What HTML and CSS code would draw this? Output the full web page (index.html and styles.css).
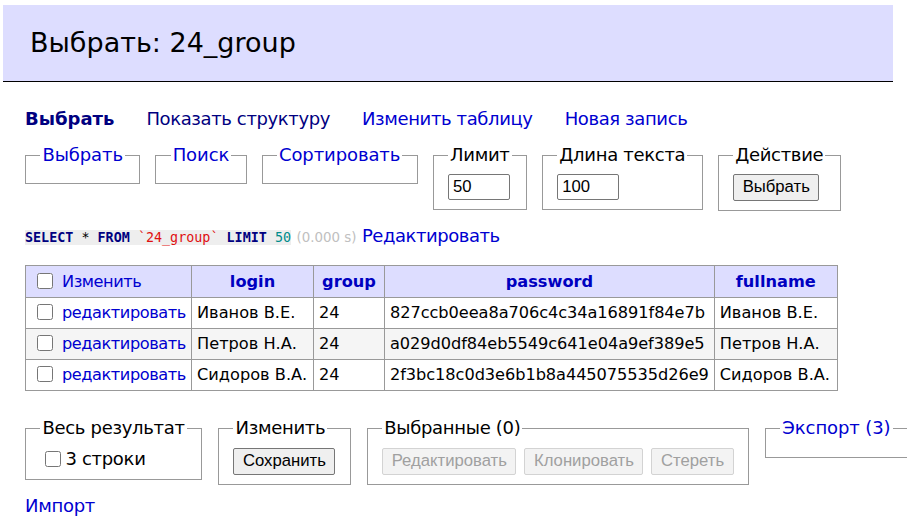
FILE: index.html
```html
<!DOCTYPE html>
<html lang="ru">
<head>
<meta charset="utf-8">
<title>Выбрать: 24_group</title>
<link rel="stylesheet" href="styles.css">
</head>
<body>
<div class="page">
  <h2 class="title">Выбрать: 24_group</h2>
  <div class="content">
    <p class="links">
      <a class="cur" href="#">Выбрать</a>
      <a class="visited" href="#">Показать структуру</a>
      <a href="#">Изменить таблицу</a>
      <a href="#">Новая запись</a>
    </p>
    <form class="filters">
      <fieldset class="fs"><legend><a href="#">Выбрать</a></legend><div class="empty"></div></fieldset>
      <fieldset class="fs"><legend><a href="#">Поиск</a></legend><div class="empty"></div></fieldset>
      <fieldset class="fs"><legend><a href="#">Сортировать</a></legend><div class="empty"></div></fieldset>
      <fieldset class="fs"><legend>Лимит</legend><input class="num" type="text" value="50"></fieldset>
      <fieldset class="fs"><legend>Длина текста</legend><input class="num" type="text" value="100"></fieldset>
      <fieldset class="fs"><legend>Действие</legend><button class="btn" type="button">Выбрать</button></fieldset>
    </form>
    <p class="query"><code class="sql"><b class="kw">SELECT</b> * <b class="kw">FROM</b> <span class="str">`24_group`</span> <b class="kw">LIMIT</b> <span class="n">50</span></code> <span class="time">(0.000 s)</span> <a href="#">Редактировать</a></p>
    <table class="data">
      <thead>
        <tr>
          <td class="first"><input type="checkbox" class="cb"><a href="#">Изменить</a></td>
          <th class="c-login"><a href="#">login</a></th>
          <th class="c-group"><a href="#">group</a></th>
          <th class="c-pass"><a href="#">password</a></th>
          <th class="c-full"><a href="#">fullname</a></th>
        </tr>
      </thead>
      <tbody>
        <tr>
          <td class="first"><input type="checkbox" class="cb"><a href="#">редактировать</a></td>
          <td>Иванов В.Е.</td><td>24</td><td class="hash">827ccb0eea8a706c4c34a16891f84e7b</td><td>Иванов В.Е.</td>
        </tr>
        <tr class="odd">
          <td class="first"><input type="checkbox" class="cb"><a href="#">редактировать</a></td>
          <td>Петров Н.А.</td><td>24</td><td class="hash">a029d0df84eb5549c641e04a9ef389e5</td><td>Петров Н.А.</td>
        </tr>
        <tr>
          <td class="first"><input type="checkbox" class="cb"><a href="#">редактировать</a></td>
          <td>Сидоров В.А.</td><td>24</td><td class="hash">2f3bc18c0d3e6b1b8a445075535d26e9</td><td>Сидоров В.А.</td>
        </tr>
      </tbody>
    </table>
    <div class="footer">
      <fieldset class="fs"><legend>Весь результат</legend><label class="all"><input type="checkbox" class="cb">3 строки</label></fieldset>
      <fieldset class="fs"><legend>Изменить</legend><button class="btn" type="button">Сохранить</button></fieldset>
      <fieldset class="fs"><legend>Выбранные (0)</legend><div class="btns"><button class="btn" type="button" disabled>Редактировать</button><button class="btn" type="button" disabled>Клонировать</button><button class="btn" type="button" disabled>Стереть</button></div></fieldset>
      <fieldset class="fs export"><legend><a href="#">Экспорт (3)</a></legend><div class="empty"></div></fieldset>
    </div>
    <p class="import"><a href="#">Импорт</a></p>
  </div>
</div>
</body>
</html>
```
FILE: styles.css
```css
html, body {
  margin: 0;
  padding: 0;
  overflow: hidden;
  background: #fff;
}
body {
  font-family: "DejaVu Sans", Verdana, sans-serif;
  font-size: 18px;
  line-height: 1.25;
  color: #000;
  letter-spacing: -0.3px;
}
a {
  color: #0000d0;
  text-decoration: none;
}
.page {
  padding: 5px 14px 0 3px;
}
.title {
  margin: 0 0 20px 0;
  padding: 21px 27px;
  font-size: 27px;
  line-height: 1.25;
  font-weight: normal;
  letter-spacing: 0;
  background: #ddf;
  border-bottom: 1px solid #000;
}
.content {
  padding-left: 22px;
}
.links {
  margin: 0;
  padding-top: 6px;
  display: flex;
  gap: 32px;
  letter-spacing: -0.38px;
}
.links a.cur {
  font-weight: bold;
  color: #000080;
  letter-spacing: 0;
}
.links a.visited {
  color: #000080;
}
.filters, .footer {
  display: flex;
  align-items: flex-start;
  gap: 16px;
  margin: 0;
}
.filters {
  margin-top: 14px;
}
.fs {
  flex: none;
  margin: 0;
  padding: 7px 14.4px 9px;
  border: 1px solid #999;
  min-width: 0;
  white-space: nowrap;
}
.fs legend {
  padding: 0 2px;
}
.fs legend a {
  letter-spacing: -0.1px;
}
.filters .fs + .fs {
  margin-left: -1px;
}
.empty {
  height: 0;
}
.num {
  display: block;
  box-sizing: border-box;
  width: 62px;
  height: 26px;
  margin: 0;
  padding: 1px 4px;
  font-family: "Liberation Sans", Arial, sans-serif;
  font-size: 16.7px;
  letter-spacing: 0;
  border: 1px solid #767676;
  border-radius: 2px;
}
.btn {
  box-sizing: border-box;
  height: 27px;
  margin: 0;
  padding: 1px 8.5px;
  font-family: "Liberation Sans", Arial, sans-serif;
  font-size: 16.7px;
  letter-spacing: 0;
  color: #000;
  background: #efefef;
  border: 1px solid #767676;
  border-radius: 2px;
}
.btn:disabled {
  color: #a0a0a0;
  background: #f3f3f3;
  border-color: #d3d3d3;
}
.query {
  margin: 14px 0 0;
}
.sql {
  font-family: "DejaVu Sans Mono", monospace;
  font-size: 13.4px;
  letter-spacing: 0;
  background: #eee;
  color: #000;
}
.kw {
  color: #000080;
}
.str {
  color: #e01010;
}
.n {
  color: #008b8b;
}
.time {
  color: #c0c0c0;
  font-size: 13.4px;
  letter-spacing: 0;
}
.query a {
  letter-spacing: -0.45px;
}
.data {
  margin-top: 18px;
  border-collapse: collapse;
  font-size: 16.2px;
  line-height: 1.25;
  letter-spacing: 0;
}
.data td, .data th {
  border: 1px solid #999;
  padding: 3px 5px;
  height: 24px;
  white-space: nowrap;
  text-align: left;
}
.data thead td, .data thead th {
  background: #ddf;
  height: 25px;
}
.data thead th {
  text-align: center;
  font-weight: bold;
}
.data thead th a {
  color: #0000c0;
}
.data td a {
  letter-spacing: -0.45px;
}
.data td.hash {
  letter-spacing: -0.07px;
}
.data .first { width: 155px; }
.data .c-login { width: 111px; }
.data .c-group { width: 60px; }
.data .c-pass { width: 315px; }
.data .c-full { width: 112px; }
.data .odd td {
  background: #f5f5f5;
}
.cb {
  width: 16px;
  height: 16px;
  margin: 0 9px 0 6px;
  vertical-align: -2px;
}
.footer {
  margin-top: 26px;
}
.footer .fs {
  padding-top: 8px;
}
.all {
  display: block;
}
.all .cb {
  margin: 0 4px 0 5px;
}
.btns {
  display: flex;
  gap: 8px;
}
.import {
  margin: 10px 0 0;
}
```
